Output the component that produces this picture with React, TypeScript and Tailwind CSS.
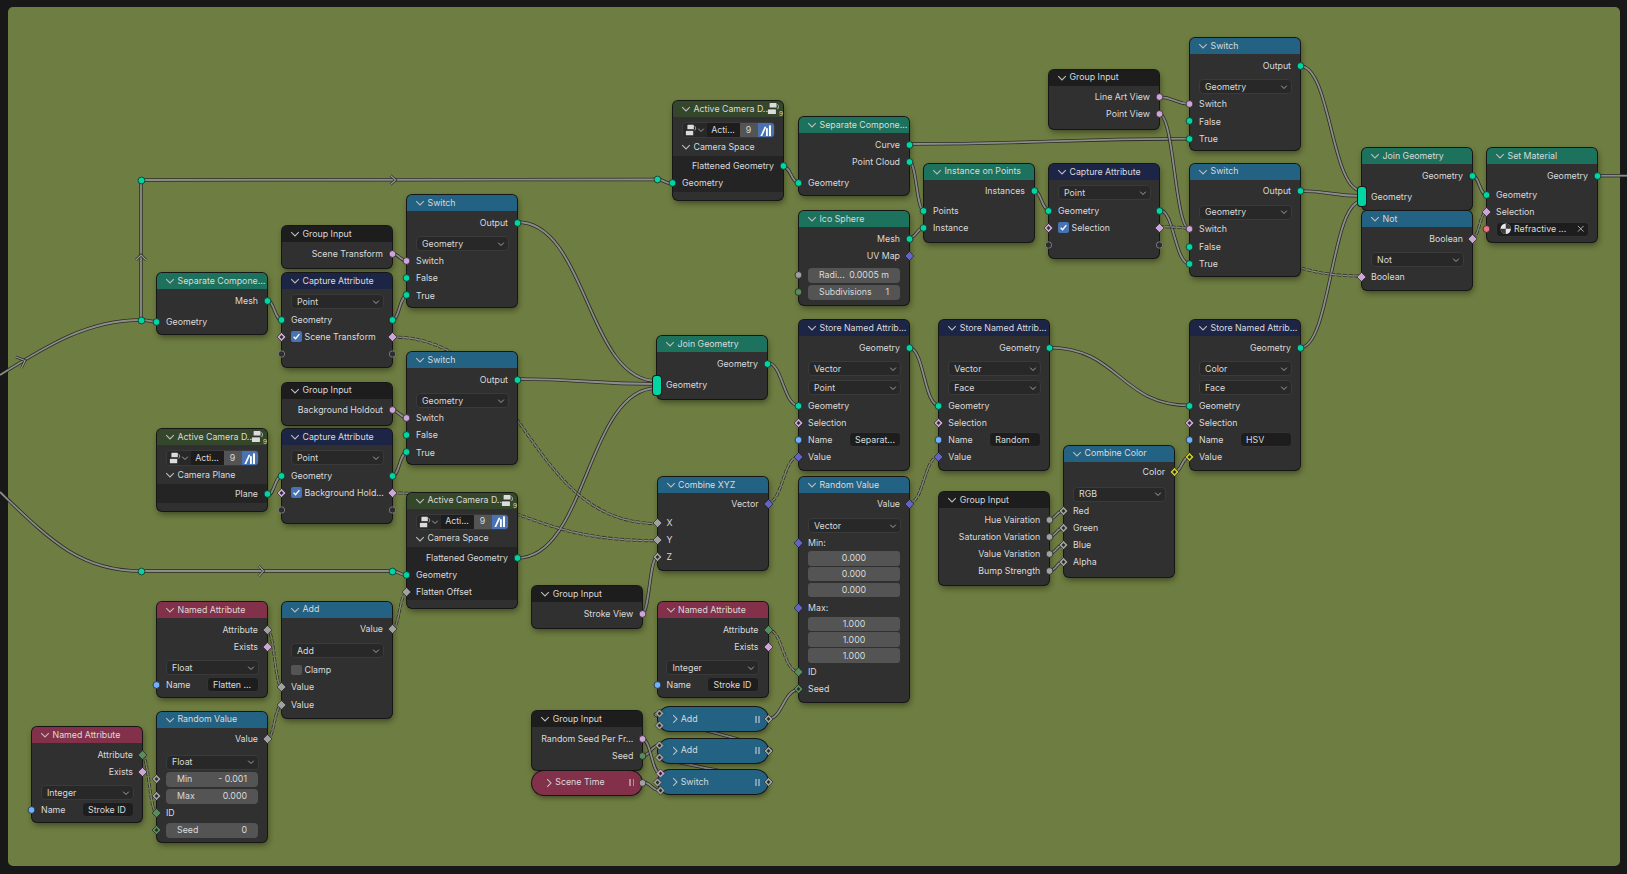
import React from "react";

const GEO = "#00d6a3", BOOL = "#cca6d6", FLT = "#a1a1a1", INT = "#598c5c", STR = "#70b2ff", VEC = "#6363c7", COL = "#c7c729", MAT = "#eb7582";
const TEAL = "bg-[#1d725e]", RED = "bg-[#83314a]", BLUE = "bg-[#246283]", NAVY = "bg-[#1d2546]", DARK = "bg-[#1d1d1d]", OLIVE = "bg-[#35472a]";

type Sh = "c" | "d" | "h" | "r";

function Glyph({ c, sh }: { c?: string; sh: Sh }) {
  return (
    <>
      {sh === "c" && <circle cx="5.5" cy="5.5" r="3.4" fill={c} stroke="#1a1a1a" strokeWidth="0.7" />}
      {sh === "r" && <circle cx="5.5" cy="5.5" r="3.2" fill="#2c2c2c" stroke="#808080" strokeWidth="0.9" />}
      {(sh === "d" || sh === "h") && <path d="M5.5 1 10 5.5 5.5 10 1 5.5Z" fill={c} stroke="#1a1a1a" strokeWidth="0.6" />}
      {sh === "h" && <path d="M5.5 3.6 7.4 5.5 5.5 7.4 3.6 5.5Z" fill="#2a2a2a" />}
    </>
  );
}

function Sock({ color, sh = "c", side }: { color?: string; sh?: Sh; side: "l" | "r" }) {
  const pos = side === "l" ? "left-[-6px]" : "right-[-6px]";
  return (
    <svg viewBox="0 0 11 11" className={`absolute top-1/2 -translate-y-1/2 w-[11px] h-[11px] z-10 ${pos}`}>
      <Glyph c={color} sh={sh} />
    </svg>
  );
}

function Chev({ right, cls = "" }: { right?: boolean; cls?: string }) {
  return (
    <svg viewBox="0 0 10 10" className={`w-[10px] h-[10px] shrink-0 ${cls}`} fill="none" stroke="#bdbdbd" strokeWidth="1.1">
      {right ? <path d="M3.2 1.2 7 5 3.2 8.8" /> : <path d="M1.2 3.2 5 7 8.8 3.2" />}
    </svg>
  );
}

function CamIcon({ cls = "" }: { cls?: string }) {
  return (
    <svg viewBox="0 0 14 14" className={`shrink-0 ${cls}`}>
      <path d="M3.5 1h6a.8.8 0 0 1 .8.8V6H2.8V1.8A.8.8 0 0 1 3.5 1Z" fill="#dcdcdc" />
      <path d="M1 8.6a.8.8 0 0 1 .8-.8h7a.8.8 0 0 1 .8.8V13H1Z" fill="#dcdcdc" />
      <path d="M1 7.2h8" stroke="#2d2d2d" strokeWidth="0.8" />
      <path d="M11.3 2.6c1.4 1.3 1.4 3.6 0 5" stroke="#cfcfcf" strokeWidth="0.9" fill="none" />
    </svg>
  );
}

function Node({ pos, title, hdr, children, cam }: { pos: string; title: string; hdr: string; children: React.ReactNode; cam?: boolean }) {
  return (
    <div className={`absolute w-[110px] rounded-[5px] bg-[#303030] shadow-[0_0_0_1px_#161616,1px_3px_6px_rgba(0,0,0,0.45)] ${pos}`}>
      <div className={`relative flex items-center h-[16px] rounded-t-[5px] pl-[8px] gap-[2.5px] whitespace-nowrap ${hdr}`}>
        <Chev />
        <span className="leading-none">{title}</span>
        {cam && (
          <span className="absolute right-[0px] top-[1px] flex">
            <CamIcon cls="w-[13px] h-[13px]" />
            <span className="text-[6.5px] leading-none mt-[9px] -ml-[1px]">9</span>
          </span>
        )}
      </div>
      {children}
    </div>
  );
}

function S({ c }: { c: string }) {
  return <div className={c} />;
}

function R({ cls = "", children }: { cls?: string; children?: React.ReactNode }) {
  return <div className={`relative h-[17px] flex items-center whitespace-nowrap ${cls}`}>{children}</div>;
}

function Out({ l, c, sh = "c" }: { l: string; c: string; sh?: Sh }) {
  return (
    <R cls="justify-end pr-[9px] pt-[1px]">
      {l}
      <Sock side="r" color={c} sh={sh} />
    </R>
  );
}

function In({ l, c, sh = "c", o, osh = "c" }: { l?: string; c?: string; sh?: Sh; o?: string; osh?: Sh }) {
  return (
    <R cls="pl-[9px] pt-[1px]">
      {l}
      <Sock side="l" color={c} sh={sh} />
      {o && <Sock side="r" color={o} sh={osh} />}
    </R>
  );
}

function Dd({ l }: { l: string }) {
  return (
    <R cls="px-[8.5px]">
      <div className="w-full h-[15px] flex items-center justify-between pl-[5.5px] pr-[2px] rounded-[4px] bg-[#282828] border border-[#3a3a3a]">
        <span className="pt-[1px]">{l}</span>
        <Chev cls="scale-75" />
      </div>
    </R>
  );
}

function Fld({ l, v, c, sh = "h" }: { l: string; v: string; c?: string; sh?: Sh }) {
  return (
    <R cls="px-[9px]">
      {c && <Sock side="l" color={c} sh={sh} />}
      <div className="w-full h-[15px] flex items-center justify-between pt-[1px] px-[11px] rounded-[4px] bg-[#545454]">
        <span>{l}</span>
        <span>{v}</span>
      </div>
    </R>
  );
}

function Stack({ vals }: { vals: string[] }) {
  return (
    <div className="mx-[9px] flex flex-col gap-[1.2px] rounded-[4px]">
      {vals.map((v, i) => (
        <div key={i} className="h-[14.6px] flex items-center justify-center pt-[1px] bg-[#545454] rounded-[3px]">
          {v}
        </div>
      ))}
    </div>
  );
}

function NameRow({ v }: { v: string }) {
  return (
    <R cls="pl-[9px] pr-[8.5px] justify-between">
      <Sock side="l" color={STR} />
      <span className="pt-[1px]">Name</span>
      <div className="w-[52px] h-[15px] flex items-center pl-[5.5px] pt-[1px] rounded-[4px] bg-[#1d1d1d] border border-[#333] overflow-hidden">{v}</div>
    </R>
  );
}

function Chk({ l, on = true }: { l: string; on?: boolean }) {
  return (
    <span className="flex items-center gap-[3px]">
      <span className={`w-[10.5px] h-[10.5px] rounded-[2px] flex items-center justify-center ${on ? "bg-[#4772b3]" : "bg-[#545454]"}`}>
        {on && (
          <svg viewBox="0 0 10 10" className="w-[9px] h-[9px]" fill="none" stroke="#fff" strokeWidth="1.5">
            <path d="M1.8 5.2 4 7.4 8.2 2.4" />
          </svg>
        )}
      </span>
      <span className="pt-[1px]">{l}</span>
    </span>
  );
}

function Capture({ pos, l }: { pos: string; l: string }) {
  return (
    <Node pos={pos} title="Capture Attribute" hdr={NAVY}>
      <S c="h-[4px]" />
      <Dd l="Point" />
      <S c="h-[1px]" />
      <In l="Geometry" c={GEO} o={GEO} />
      <R cls="pl-[9px]">
        <Sock side="l" color={BOOL} sh="h" />
        <Sock side="r" color={BOOL} sh="d" />
        <Chk l={l} />
      </R>
      <In sh="r" o="#000" osh="r" />
      <S c="h-[5px]" />
    </Node>
  );
}

function Switch({ pos }: { pos: string }) {
  return (
    <Node pos={pos} title="Switch" hdr={BLUE}>
      <S c="h-[3px]" />
      <Out l="Output" c={GEO} />
      <S c="h-[4px]" />
      <Dd l="Geometry" />
      <S c="h-[0.3px]" />
      <In l="Switch" c={BOOL} />
      <S c="h-[0.4px]" />
      <In l="False" c={GEO} />
      <S c="h-[0.3px]" />
      <In l="True" c={GEO} />
      <S c="h-[3px]" />
    </Node>
  );
}

function GroupIn({ pos, rows }: { pos: string; rows: [string, string][] }) {
  return (
    <Node pos={pos} title="Group Input" hdr={DARK}>
      <S c="h-[3px]" />
      {rows.map(([l, c]) => (
        <Out key={l} l={l} c={c} />
      ))}
      <S c="h-[6px]" />
    </Node>
  );
}

function NamedAttr({ pos, type, name, attr }: { pos: string; type: string; name: string; attr: string }) {
  return (
    <Node pos={pos} title="Named Attribute" hdr={RED}>
      <S c="h-[3px]" />
      <Out l="Attribute" c={attr} sh="d" />
      <Out l="Exists" c={BOOL} sh="d" />
      <S c="h-[4px]" />
      <Dd l={type} />
      <NameRow v={name} />
      <S c="h-[4px]" />
    </Node>
  );
}

function Store({ pos, a, b, name, vc, vsh }: { pos: string; a: string; b: string; name: string; vc: string; vsh: Sh }) {
  return (
    <Node pos={pos} title="Store Named Attrib..." hdr={NAVY}>
      <S c="h-[3px]" />
      <Out l="Geometry" c={GEO} />
      <S c="h-[4px]" />
      <Dd l={a} />
      <S c="h-[2px]" />
      <Dd l={b} />
      <S c="h-[1px]" />
      <In l="Geometry" c={GEO} />
      <In l="Selection" c={BOOL} sh="h" />
      <NameRow v={name} />
      <In l="Value" c={vc} sh={vsh} />
      <S c="h-[5px]" />
    </Node>
  );
}

function CamControls() {
  return (
    <div className="mx-[8.5px] h-[16px] flex items-stretch rounded-[4px] overflow-hidden border border-[#3a3a3a] bg-[#282828]">
      <span className="w-[24px] flex items-center pl-[2px]">
        <CamIcon cls="w-[12px] h-[12px]" />
        <Chev cls="scale-75 -ml-[1px]" />
      </span>
      <span className="w-[33px] flex items-center justify-center bg-[#1d1d1d]">Acti...</span>
      <span className="w-[18px] flex items-center justify-center bg-[#545454]">9</span>
      <span className="flex-1 flex items-center justify-center bg-[#4772b3]">
        <svg viewBox="0 0 14 14" className="w-[13px] h-[13px]" fill="#fff">
          <path d="M1.5 13 6 3h2L3.5 13Z" />
          <rect x="7.5" y="4.5" width="2" height="8.5" />
          <rect x="10.7" y="1.5" width="2.2" height="11.5" />
        </svg>
      </span>
    </div>
  );
}

function CamNode({ pos, sub, children }: { pos: string; sub: string; children: React.ReactNode }) {
  return (
    <Node pos={pos} title="Active Camera D.." hdr={OLIVE} cam>
      <S c="h-[5px]" />
      <CamControls />
      <div className="h-[17px] mt-[0.5px] pl-[8px] flex items-center gap-[2.5px]">
        <Chev />
        {sub}
      </div>
      <div className="bg-[#242424] pt-[2px]">{children}</div>
      <S c="h-[8px]" />
    </Node>
  );
}

function Pill({ pos, title, bg, bars, out }: { pos: string; title: string; bg: string; bars: string; out: React.ReactNode }) {
  return (
    <div className={`absolute w-[110px] h-[24px] rounded-[12px] flex items-center pl-[12px] gap-[1px] shadow-[0_0_0_1px_#161616,1px_3px_5px_rgba(0,0,0,0.4)] ${bg} ${pos}`}>
      <Chev right />
      {title}
      <span className="absolute right-[8px] flex gap-[1.5px]">
        <span className={`w-[1.7px] h-[7px] ${bars}`} />
        <span className={`w-[1.7px] h-[7px] ${bars}`} />
      </span>
      {out}
    </div>
  );
}

function At({ cls, c, sh = "h" }: { cls: string; c: string; sh?: Sh }) {
  return (
    <div className={`absolute w-0 h-0 z-10 ${cls}`}>
      <svg viewBox="0 0 11 11" className="absolute left-[-5.5px] top-[-5.5px] w-[11px] h-[11px]">
        <Glyph c={c} sh={sh} />
      </svg>
    </div>
  );
}

function Multi() {
  return <div className="absolute left-[-4px] top-[-1px] w-[8px] h-[19px] rounded-[3px] bg-[#00d6a3] shadow-[0_0_0_1px_#1a1a1a] z-10" />;
}

type W = [number, number, number, number, number?, number?];
const solid: W[] = [
  [141, 320, 157, 321.7],
  [141, 180, 657, 179.5],
  [657, 179.5, 673, 184],
  [267, 300.7, 282, 320],
  [392, 253.7, 407, 260.7],
  [392, 320, 407, 295.5],
  [392, 410.5, 407, 417.5],
  [392, 476, 407, 452.5],
  [267, 495.7, 282, 476],
  [517, 222, 657, 381],
  [517, 379, 657, 384],
  [517, 558, 657, 388],
  [141, 571, 392, 571],
  [392, 571, 407, 575.3],
  [767, 362.6, 799, 405.5],
  [909, 347.6, 939, 405.5],
  [1049, 347.6, 1190, 405.5],
  [1300, 347.6, 1362, 201],
  [1300, 191, 1362, 196],
  [1300, 66, 1362, 191],
  [1472, 175.7, 1487, 195],
  [1597, 175.7, 1627, 175.7],
  [783, 166.7, 799, 182.7],
  [909, 144, 1190, 138.7],
  [909, 161, 924, 211],
  [909, 238, 924, 228],
  [1034, 191, 1049, 209.6],
  [1159, 97, 1190, 104],
  [1159, 114, 1190, 229.5],
  [1159, 209.6, 1190, 264],
  [642, 756, 659.3, 745.3],
  [642, 739, 660.7, 773.7],
  [642, 782, 660.7, 790.7],
  [767, 719.3, 799, 689.7],
  [642, 613.7, 657, 557.5],
  [767, 751, 659.3, 713.7, 0, 32],
  [767, 782, 659.3, 757, 0, 16],
  [1049, 519, 1064, 510.5],
  [1049, 536.5, 1064, 527.5],
  [1049, 553.5, 1064, 544.5],
  [1049, 571, 1064, 561.5],
  [1174, 472, 1190, 456.5],
];
const dashed: W[] = [
  [392, 337, 657, 523.5],
  [392, 493, 657, 540.7],
  [267, 629, 282, 687],
  [267, 739, 282, 705],
  [392, 629, 407, 592.7],
  [141.5, 755, 157, 813],
  [767, 629, 799, 672],
  [767, 503, 799, 456.5],
  [909, 503, 939, 456.5],
  [1159, 226.7, 1362, 276],
  [1472, 238, 1487, 212],
];

const pathOf = ([a, b, c, d, , h]: W) => {
  const k = h ?? Math.abs(c - a) * 0.5;
  return `M${a} ${b}C${a + k} ${b} ${c - k} ${d} ${c} ${d}`;
};

const freeWires = ["M0 375C48 345 88 320 141 320", "M141 320L141 180", "M0 492C50 540 80 571 141 571"];
const chevrons = [
  "M16 357 25 360.5 21.5 368",
  "M136 260 141 255 146 260",
  "M390.5 175.5 395.5 180 390.5 184.5",
  "M258.5 565.5 263.5 571 258.5 576.5",
];

function Wires() {
  return (
    <svg className="absolute left-0 top-0 w-[1627px] h-[874px]" fill="none" strokeLinecap="butt">
      {solid.map((w, i) => (
        <g key={i}>
          <path d={pathOf(w)} stroke="#1f1f1f" strokeOpacity="0.85" strokeWidth="3.4" />
          <path d={pathOf(w)} stroke="#8c8c8c" strokeWidth="1.8" />
        </g>
      ))}
      {freeWires.map((d) => (
        <g key={d}>
          <path d={d} stroke="#1f1f1f" strokeOpacity="0.85" strokeWidth="3.4" />
          <path d={d} stroke="#8c8c8c" strokeWidth="1.8" />
        </g>
      ))}
      {chevrons.map((d) => (
        <g key={d}>
          <path d={d} stroke="#1f1f1f" strokeOpacity="0.85" strokeWidth="2.6" />
          <path d={d} stroke="#9a9a9a" strokeWidth="1.2" />
        </g>
      ))}
      {dashed.map((w, i) => (
        <g key={i}>
          <path d={pathOf(w)} stroke="#262626" strokeOpacity="0.85" strokeWidth="3" strokeDasharray="4.5 1.5" />
          <path d={pathOf(w)} stroke="#8a8a8a" strokeWidth="1.4" strokeDasharray="4.5 1.5" />
        </g>
      ))}
    </svg>
  );
}

export default function App() {
  return (
    <div className="relative w-[1627px] h-[874px] overflow-hidden bg-[#181818] pt-[7px] pl-[8px] pr-[7px] pb-[8px] font-[Inter,sans-serif] text-[8.8px] leading-none text-[#dadada]">
      <div className="w-full h-full rounded-[5px] bg-[#6e7d41]" />
      <Wires />

      <At cls="left-[141px] top-[180px]" c={GEO} sh="c" />
      <At cls="left-[141px] top-[320px]" c={GEO} sh="c" />
      <At cls="left-[141px] top-[571px]" c={GEO} sh="c" />
      <At cls="left-[657px] top-[179.5px]" c={GEO} sh="c" />
      <At cls="left-[392px] top-[571px]" c={GEO} sh="c" />

      <NamedAttr pos="left-[32px] top-[727px]" type="Integer" name="Stroke ID" attr={INT} />

      <Node pos="left-[157px] top-[273px]" title="Separate Compone..." hdr={TEAL}>
        <S c="h-[3px]" />
        <Out l="Mesh" c={GEO} />
        <S c="h-[4px]" />
        <In l="Geometry" c={GEO} />
        <S c="h-[4px]" />
      </Node>

      <CamNode pos="left-[157px] top-[429px]" sub="Camera Plane">
        <Out l="Plane" c={GEO} />
      </CamNode>

      <NamedAttr pos="left-[157px] top-[602px]" type="Float" name="Flatten ..." attr={FLT} />

      <Node pos="left-[157px] top-[711.7px]" title="Random Value" hdr={BLUE}>
        <S c="h-[3px]" />
        <Out l="Value" c={FLT} sh="d" />
        <S c="h-[6px]" />
        <Dd l="Float" />
        <Fld l="Min" v="- 0.001" c={FLT} />
        <Fld l="Max" v="0.000" c={FLT} />
        <In l="ID" c={INT} sh="d" />
        <Fld l="Seed" v="0" c={INT} />
        <S c="h-[3.6px]" />
      </Node>

      <GroupIn pos="left-[282px] top-[226px]" rows={[["Scene Transform", BOOL]]} />
      <Capture pos="left-[282px] top-[273px]" l="Scene Transform" />
      <GroupIn pos="left-[282px] top-[382.5px]" rows={[["Background Holdout", BOOL]]} />
      <Capture pos="left-[282px] top-[429px]" l="Background Hold..." />

      <Node pos="left-[282px] top-[601.7px]" title="Add" hdr={BLUE}>
        <S c="h-[3px]" />
        <Out l="Value" c={FLT} sh="d" />
        <S c="h-[4.5px]" />
        <Dd l="Add" />
        <S c="h-[2.3px]" />
        <R cls="pl-[9px]">
          <Chk l="Clamp" on={false} />
        </R>
        <In l="Value" c={FLT} sh="d" />
        <S c="h-[1px]" />
        <In l="Value" c={FLT} sh="d" />
        <S c="h-[4.8px]" />
      </Node>

      <Switch pos="left-[407px] top-[195px]" />
      <Switch pos="left-[407px] top-[352px]" />

      <CamNode pos="left-[407px] top-[492.7px]" sub="Camera Space">
        <Out l="Flattened Geometry" c={GEO} />
        <In l="Geometry" c={GEO} />
        <In l="Flatten Offset" c={FLT} sh="d" />
      </CamNode>

      <GroupIn pos="left-[532.3px] top-[586.3px]" rows={[["Stroke View", BOOL]]} />
      <GroupIn pos="left-[532.3px] top-[711.3px]" rows={[["Random Seed Per Fr...", BOOL], ["Seed", INT]]} />
      <Pill
        pos="left-[532.3px] top-[770.5px]"
        title="Scene Time"
        bg="bg-[#83314a]"
        bars="bg-[#b98a98]"
        out={<Sock side="r" color={FLT} />}
      />

      <Node pos="left-[657px] top-[336px]" title="Join Geometry" hdr={TEAL}>
        <S c="h-[3px]" />
        <Out l="Geometry" c={GEO} />
        <S c="h-[4.5px]" />
        <R cls="pl-[9px] pt-[1px]">
          Geometry
          <Multi />
        </R>
        <S c="h-[5px]" />
      </Node>

      <Node pos="left-[657.5px] top-[477.3px]" title="Combine XYZ" hdr={BLUE}>
        <S c="h-[2px]" />
        <Out l="Vector" c={VEC} sh="d" />
        <S c="h-[2.5px]" />
        <In l="X" c={FLT} sh="d" />
        <In l="Y" c={FLT} sh="d" />
        <In l="Z" c={FLT} sh="h" />
        <S c="h-[4.5px]" />
      </Node>

      <NamedAttr pos="left-[657.5px] top-[602px]" type="Integer" name="Stroke ID" attr={INT} />

      <Pill pos="left-[657.7px] top-[707.3px]" title="Add" bg={BLUE} bars="bg-[#7d9fb5]" out={<Sock side="r" color={FLT} sh="h" />} />
      <Pill pos="left-[657.7px] top-[738.7px]" title="Add" bg={BLUE} bars="bg-[#7d9fb5]" out={<Sock side="r" color={FLT} sh="h" />} />
      <Pill pos="left-[657.7px] top-[770.3px]" title="Switch" bg={BLUE} bars="bg-[#7d9fb5]" out={<Sock side="r" color={FLT} sh="h" />} />
      <At cls="left-[659.3px] top-[713.7px]" c={FLT} />
      <At cls="left-[659.3px] top-[725.7px]" c={FLT} />
      <At cls="left-[659.3px] top-[745.3px]" c={FLT} />
      <At cls="left-[659.3px] top-[757px]" c={FLT} />
      <At cls="left-[660.7px] top-[773.7px]" c={BOOL} />
      <At cls="left-[657.7px] top-[782px]" c={FLT} />
      <At cls="left-[660.7px] top-[790.7px]" c={FLT} />

      <CamNode pos="left-[673px] top-[101px]" sub="Camera Space">
        <Out l="Flattened Geometry" c={GEO} />
        <In l="Geometry" c={GEO} />
      </CamNode>

      <Node pos="left-[799px] top-[117px]" title="Separate Compone..." hdr={TEAL}>
        <S c="h-[3px]" />
        <Out l="Curve" c={GEO} />
        <Out l="Point Cloud" c={GEO} />
        <S c="h-[4px]" />
        <In l="Geometry" c={GEO} />
        <S c="h-[4px]" />
      </Node>

      <Node pos="left-[799px] top-[211px]" title="Ico Sphere" hdr={TEAL}>
        <S c="h-[3px]" />
        <Out l="Mesh" c={GEO} />
        <Out l="UV Map" c={VEC} sh="d" />
        <S c="h-[2.5px]" />
        <Fld l="Radi..." v="0.0005 m" c={FLT} sh="c" />
        <Fld l="Subdivisions" v="1" c={INT} sh="c" />
        <S c="h-[4px]" />
      </Node>

      <Store pos="left-[799px] top-[320px]" a="Vector" b="Point" name="Separat..." vc={VEC} vsh="d" />

      <Node pos="left-[799px] top-[477px]" title="Random Value" hdr={BLUE}>
        <S c="h-[2px]" />
        <Out l="Value" c={VEC} sh="d" />
        <S c="h-[5px]" />
        <Dd l="Vector" />
        <In l="Min:" c={VEC} sh="d" />
        <Stack vals={["0.000", "0.000", "0.000"]} />
        <S c="h-[2.5px]" />
        <In l="Max:" c={VEC} sh="d" />
        <Stack vals={["1.000", "1.000", "1.000"]} />
        <S c="h-[1px]" />
        <In l="ID" c={INT} sh="d" />
        <In l="Seed" c={INT} sh="h" />
        <S c="h-[3.8px]" />
      </Node>

      <Node pos="left-[924px] top-[163.5px]" title="Instance on Points" hdr={TEAL}>
        <S c="h-[3px]" />
        <Out l="Instances" c={GEO} />
        <S c="h-[3px]" />
        <In l="Points" c={GEO} />
        <In l="Instance" c={GEO} />
        <S c="h-[5px]" />
      </Node>

      <Store pos="left-[939.3px] top-[320px]" a="Vector" b="Face" name="Random" vc={VEC} vsh="d" />

      <GroupIn
        pos="left-[939.3px] top-[492px]"
        rows={[["Hue Vairation", FLT], ["Saturation Variation", FLT], ["Value Variation", FLT], ["Bump Strength", FLT]]}
      />

      <GroupIn pos="left-[1049px] top-[69.5px]" rows={[["Line Art View", BOOL], ["Point View", BOOL]]} />
      <Capture pos="left-[1049px] top-[164px]" l="Selection" />

      <Node pos="left-[1064px] top-[445.7px]" title="Combine Color" hdr={BLUE}>
        <S c="h-[2px]" />
        <Out l="Color" c={COL} sh="h" />
        <S c="h-[5px]" />
        <Dd l="RGB" />
        <In l="Red" c={FLT} sh="h" />
        <In l="Green" c={FLT} sh="h" />
        <In l="Blue" c={FLT} sh="h" />
        <In l="Alpha" c={FLT} sh="h" />
        <S c="h-[6px]" />
      </Node>

      <Switch pos="left-[1190px] top-[38.3px]" />
      <Switch pos="left-[1190px] top-[163.6px]" />
      <Store pos="left-[1190px] top-[320px]" a="Color" b="Face" name="HSV" vc={COL} vsh="h" />

      <Node pos="left-[1362px] top-[148px]" title="Join Geometry" hdr={TEAL}>
        <S c="h-[3px]" />
        <Out l="Geometry" c={GEO} />
        <S c="h-[4px]" />
        <R cls="pl-[9px] pt-[1px]">
          Geometry
          <Multi />
        </R>
        <S c="h-[5px]" />
      </Node>

      <Node pos="left-[1362px] top-[211px]" title="Not" hdr={BLUE}>
        <S c="h-[3px]" />
        <Out l="Boolean" c={BOOL} sh="d" />
        <S c="h-[4px]" />
        <Dd l="Not" />
        <In l="Boolean" c={BOOL} sh="d" />
        <S c="h-[5px]" />
      </Node>

      <Node pos="left-[1487px] top-[148px]" title="Set Material" hdr={TEAL}>
        <S c="h-[3px]" />
        <Out l="Geometry" c={GEO} />
        <S c="h-[2.5px]" />
        <In l="Geometry" c={GEO} />
        <In l="Selection" c={BOOL} sh="d" />
        <R cls="pl-[8.5px] pr-[8.5px]">
          <Sock side="l" color={MAT} />
          <div className="w-full h-[15px] flex items-center gap-[3px] pl-[3px] pr-[3px] rounded-[4px] bg-[#1d1d1d] border border-[#333]">
            <svg viewBox="0 0 12 12" className="w-[11.5px] h-[11.5px] shrink-0">
              <circle cx="6" cy="6" r="5.4" fill="#e8e8e8" />
              <path d="M6 .6A5.4 5.4 0 0 1 11.4 6H6ZM6 6v5.4A5.4 5.4 0 0 1 .6 6Z" fill="#3a3a3a" />
            </svg>
            <span className="flex-1 pt-[1px]">Refractive ...</span>
            <svg viewBox="0 0 8 8" className="w-[7.5px] h-[7.5px] shrink-0" stroke="#b5b5b5" strokeWidth="1">
              <path d="M1 1 7 7M7 1 1 7" />
            </svg>
          </div>
        </R>
        <S c="h-[4px]" />
      </Node>
    </div>
  );
}
